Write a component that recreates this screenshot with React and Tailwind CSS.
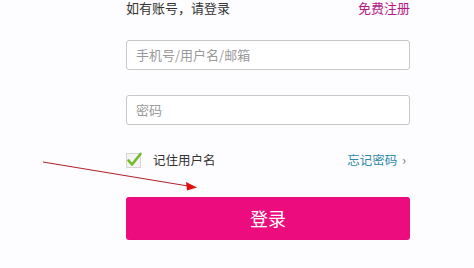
import React from "react";

function CheckIcon() {
  return (
    <svg width="17" height="16" viewBox="0 0 17 16" className="block">
      <rect x="0.5" y="1.5" width="14" height="14" fill="#f4f4f4" stroke="#d6d6d6" />
      <path d="M2.5 8.5 L6 12.5 L14.5 2" fill="none" stroke="#6fb92b" strokeWidth="2.6" strokeLinecap="round" strokeLinejoin="round" />
    </svg>
  );
}

export default function App() {
  const font = { fontFamily: '"Noto Sans CJK SC", "Liberation Sans", sans-serif' };
  return (
    <div className="relative w-[474px] h-[268px] bg-[#fdfcfe] overflow-hidden" style={font}>
      <div className="ml-[126px] w-[284px] flex flex-col">
        <div className="flex justify-between items-center h-[16px] text-[13px] leading-[16px]">
          <span className="text-[#333]">如有账号，请登录</span>
          <span className="text-[#b51a86]">免费注册</span>
        </div>
        <div className="mt-[24px] h-[30px] border border-[#c8c8c8] rounded-[3px] bg-white flex items-center pl-[9px] text-[13px] text-[#9a9a9a]">
          手机号/用户名/邮箱
        </div>
        <div className="mt-[25px] h-[30px] border border-[#c8c8c8] rounded-[3px] bg-white flex items-center pl-[9px] text-[13px] text-[#9a9a9a]">
          密码
        </div>
        <div className="mt-[27px] h-[16px] flex items-center justify-between">
          <div className="flex items-center">
            <CheckIcon />
            <span className="ml-[10px] text-[12.5px] leading-[16px] text-[#333]">记住用户名</span>
          </div>
          <div className="flex items-center pr-[4px] text-[12.5px] leading-[16px] text-[#2e8aa8]">
            <span>忘记密码</span>
            <span className="ml-[5px] text-[#666]">›</span>
          </div>
        </div>
        <div className="mt-[29px] h-[43px] rounded-[3px] bg-[#ec0c7e] flex items-center justify-center text-white text-[18px]">
          登录
        </div>
      </div>
      <svg className="absolute left-0 top-0 pointer-events-none" width="474" height="268">
        <line x1="43" y1="162" x2="188" y2="186" stroke="#b0202a" strokeWidth="1" />
        <polygon points="197,187.5 186,182 187,190.5" fill="#e01010" />
      </svg>
    </div>
  );
}
